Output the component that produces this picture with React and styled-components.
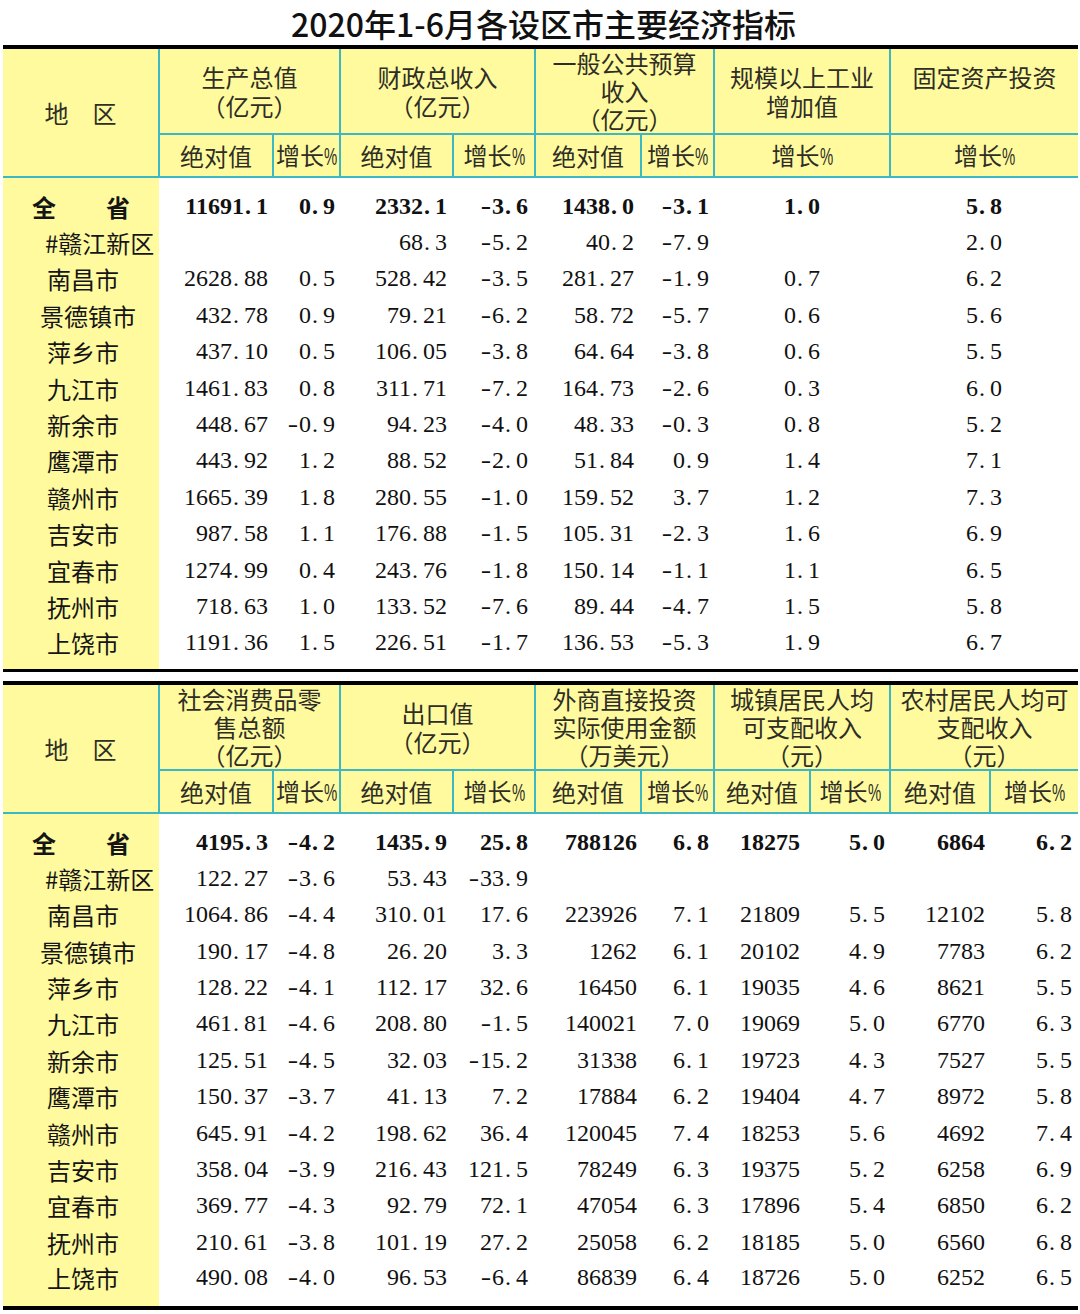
import React from 'react';
import styled, { createGlobalStyle } from 'styled-components';

const YELLOW = '#fffa9e';
const TEAL = '#3bb8c4';

const GlobalStyle = createGlobalStyle`
  html, body {
    margin: 0;
    padding: 0;
    background: #fff;
  }
  body {
    font-family: "Noto Sans CJK SC", sans-serif;
    color: #111;
    text-spacing-trim: space-all;
  }
`;

const Page = styled.div`
  width: 1080px;
  box-sizing: border-box;
  padding-left: 3px;
  display: flex;
  flex-direction: column;
`;

const Title = styled.h1`
  margin: 0;
  height: 45px;
  display: flex;
  align-items: center;
  justify-content: center;
  font-family: "Noto Sans CJK SC", sans-serif;
  font-size: 32px;
  font-weight: 500;
  line-height: 1;
  color: #111;
  padding-left: 4px;
`;

const Sheet = styled.table`
  width: 1075px;
  table-layout: fixed;
  border-collapse: collapse;
  border-top: 4px solid #000;
  border-bottom: ${p => p.$bottom}px solid #000;
  margin-bottom: ${p => p.$gap}px;
`;

const HeadRow = styled.tr`
  height: ${p => p.$h}px;
`;

const HeadCell = styled.th`
  background: ${YELLOW};
  border-right: 2px solid ${TEAL};
  border-bottom: 2px solid ${TEAL};
  padding: 0;
  font-family: "Noto Sans CJK SC", sans-serif;
  font-weight: 400;
  font-size: 24px;
  line-height: ${p => (p.$tight ? 28 : 29)}px;
  color: #2e2e26;
  text-align: center;
  vertical-align: middle;
  white-space: nowrap;

  &:last-child {
    border-right: none;
  }
`;

const Line = styled.div`
  display: block;
`;

const Pct = styled.span`
  display: inline-block;
  width: 13px;
  font-family: "Liberation Sans", sans-serif;
  transform: scaleX(0.62);
  transform-origin: left center;
`;

const Body = styled.tbody`
  tr {
    height: 36.4px;
  }
  tr:first-child {
    height: ${p => 36.4 + p.$padTop}px;
  }
  tr:first-child td {
    padding-top: ${p => p.$padTop}px;
  }
  tr:last-child {
    height: ${p => 36.4 + p.$padBottom}px;
  }
  tr:last-child td {
    padding-bottom: ${p => p.$padBottom}px;
  }
`;

const NameCell = styled.td`
  background: ${YELLOW};
  padding: 0 0 0 ${p => p.$indent}px;
  font-family: "Noto Sans CJK SC", sans-serif;
  font-size: 24px;
  font-weight: ${p => (p.$bold ? 700 : 400)};
  color: #151515;
  white-space: nowrap;
  vertical-align: middle;
`;

const Spread = styled.span`
  display: flex;
  justify-content: space-between;
  width: 98px;
`;

const ValueCell = styled.td`
  padding: 0 ${p => p.$pr}px 0 0;
  font-family: "Liberation Serif", "DejaVu Serif", serif;
  font-size: 24px;
  font-weight: ${p => (p.$bold ? 700 : 400)};
  color: #111;
  text-align: ${p => (p.$center ? 'center' : 'right')};
  white-space: nowrap;
  vertical-align: middle;
`;

const Dot = styled.span`
  display: inline-block;
  width: 0.5em;
  padding-left: 1px;
  box-sizing: border-box;
  text-align: left;
`;

const Minus = styled.span`
  display: inline-block;
  width: 0.5em;
  text-align: center;
  transform: scaleX(1.3);
`;

const Num = ({ value }) =>
  value.split(/([.-])/).map((part, i) => {
    if (part === '.') return <Dot key={i}>.</Dot>;
    if (part === '-') return <Minus key={i}>-</Minus>;
    return part;
  });

const Label = ({ text }) => {
  if (!text.endsWith('%')) return text;
  return (
    <>
      {text.slice(0, -1)}
      <Pct>%</Pct>
    </>
  );
};

const NAMES = [
  ['#赣江新区', 42],
  ['南昌市', 44],
  ['景德镇市', 37],
  ['萍乡市', 44],
  ['九江市', 44],
  ['新余市', 44],
  ['鹰潭市', 44],
  ['赣州市', 44],
  ['吉安市', 44],
  ['宜春市', 44],
  ['抚州市', 44],
  ['上饶市', 44],
];

const topTable = {
  bottom: 3,
  gap: 9,
  padTop: 11,
  padBottom: 9,
  cols: [156, 114, 67, 113, 82, 106, 73, 176, 188],
  pr: [5, 5, 6, 7, 7, 5, 0, 0],
  center: [false, false, false, false, false, false, true, true],
  groups: [
    { lines: ['生产总值', '（亿元）'], subs: ['绝对值', '增长%'] },
    { lines: ['财政总收入', '（亿元）'], subs: ['绝对值', '增长%'] },
    { lines: ['一般公共预算', '收入', '（亿元）'], subs: ['绝对值', '增长%'] },
    { lines: ['规模以上工业', '增加值'], subs: ['增长%'] },
    { lines: ['固定资产投资', '\u00a0'], subs: ['增长%'] },
  ],
  total: ['11691.1', '0.9', '2332.1', '-3.6', '1438.0', '-3.1', '1.0', '5.8'],
  rows: [
    ['', '', '68.3', '-5.2', '40.2', '-7.9', '', '2.0'],
    ['2628.88', '0.5', '528.42', '-3.5', '281.27', '-1.9', '0.7', '6.2'],
    ['432.78', '0.9', '79.21', '-6.2', '58.72', '-5.7', '0.6', '5.6'],
    ['437.10', '0.5', '106.05', '-3.8', '64.64', '-3.8', '0.6', '5.5'],
    ['1461.83', '0.8', '311.71', '-7.2', '164.73', '-2.6', '0.3', '6.0'],
    ['448.67', '-0.9', '94.23', '-4.0', '48.33', '-0.3', '0.8', '5.2'],
    ['443.92', '1.2', '88.52', '-2.0', '51.84', '0.9', '1.4', '7.1'],
    ['1665.39', '1.8', '280.55', '-1.0', '159.52', '3.7', '1.2', '7.3'],
    ['987.58', '1.1', '176.88', '-1.5', '105.31', '-2.3', '1.6', '6.9'],
    ['1274.99', '0.4', '243.76', '-1.8', '150.14', '-1.1', '1.1', '6.5'],
    ['718.63', '1.0', '133.52', '-7.6', '89.44', '-4.7', '1.5', '5.8'],
    ['1191.36', '1.5', '226.51', '-1.7', '136.53', '-5.3', '1.9', '6.7'],
  ],
};

const bottomTable = {
  bottom: 4,
  gap: 0,
  padTop: 11,
  padBottom: 11,
  cols: [156, 114, 67, 113, 82, 106, 73, 96, 80, 100, 88],
  pr: [5, 5, 6, 7, 4, 5, 10, 5, 5, 6],
  center: new Array(10).fill(false),
  groups: [
    { lines: ['社会消费品零', '售总额', '（亿元）'], subs: ['绝对值', '增长%'] },
    { lines: ['出口值', '（亿元）'], subs: ['绝对值', '增长%'] },
    { lines: ['外商直接投资', '实际使用金额', '（万美元）'], subs: ['绝对值', '增长%'] },
    { lines: ['城镇居民人均', '可支配收入', '（元）'], subs: ['绝对值', '增长%'] },
    { lines: ['农村居民人均可', '支配收入', '（元）'], subs: ['绝对值', '增长%'] },
  ],
  total: ['4195.3', '-4.2', '1435.9', '25.8', '788126', '6.8', '18275', '5.0', '6864', '6.2'],
  rows: [
    ['122.27', '-3.6', '53.43', '-33.9', '', '', '', '', '', ''],
    ['1064.86', '-4.4', '310.01', '17.6', '223926', '7.1', '21809', '5.5', '12102', '5.8'],
    ['190.17', '-4.8', '26.20', '3.3', '1262', '6.1', '20102', '4.9', '7783', '6.2'],
    ['128.22', '-4.1', '112.17', '32.6', '16450', '6.1', '19035', '4.6', '8621', '5.5'],
    ['461.81', '-4.6', '208.80', '-1.5', '140021', '7.0', '19069', '5.0', '6770', '6.3'],
    ['125.51', '-4.5', '32.03', '-15.2', '31338', '6.1', '19723', '4.3', '7527', '5.5'],
    ['150.37', '-3.7', '41.13', '7.2', '17884', '6.2', '19404', '4.7', '8972', '5.8'],
    ['645.91', '-4.2', '198.62', '36.4', '120045', '7.4', '18253', '5.6', '4692', '7.4'],
    ['358.04', '-3.9', '216.43', '121.5', '78249', '6.3', '19375', '5.2', '6258', '6.9'],
    ['369.77', '-4.3', '92.79', '72.1', '47054', '6.3', '17896', '5.4', '6850', '6.2'],
    ['210.61', '-3.8', '101.19', '27.2', '25058', '6.2', '18185', '5.0', '6560', '6.8'],
    ['490.08', '-4.0', '96.53', '-6.4', '86839', '6.4', '18726', '5.0', '6252', '6.5'],
  ],
};

const IndicatorTable = ({ data }) => (
  <Sheet $bottom={data.bottom} $gap={data.gap}>
    <colgroup>
      {data.cols.map((w, i) => (
        <col key={i} style={{ width: w }} />
      ))}
    </colgroup>
    <thead>
      <HeadRow $h={86}>
        <HeadCell rowSpan={2}>地　区</HeadCell>
        {data.groups.map((g, i) => (
          <HeadCell key={i} colSpan={g.subs.length} $tight={g.lines.length > 2}>
            {g.lines.map((l, j) => (
              <Line key={j}>{l}</Line>
            ))}
          </HeadCell>
        ))}
      </HeadRow>
      <HeadRow $h={43}>
        {data.groups.flatMap((g, i) =>
          g.subs.map((s, j) => (
            <HeadCell key={`${i}-${j}`}>
              <Label text={s} />
            </HeadCell>
          ))
        )}
      </HeadRow>
    </thead>
    <Body $padTop={data.padTop} $padBottom={data.padBottom}>
      <tr>
        <NameCell $indent={29} $bold>
          <Spread>
            <span>全</span>
            <span>省</span>
          </Spread>
        </NameCell>
        {data.total.map((v, i) => (
          <ValueCell key={i} $bold $pr={data.pr[i]} $center={data.center[i]}>
            <Num value={v} />
          </ValueCell>
        ))}
      </tr>
      {data.rows.map((row, r) => (
        <tr key={r}>
          <NameCell $indent={NAMES[r][1]}>{NAMES[r][0]}</NameCell>
          {row.map((v, i) => (
            <ValueCell key={i} $pr={data.pr[i]} $center={data.center[i]}>
              <Num value={v} />
            </ValueCell>
          ))}
        </tr>
      ))}
    </Body>
  </Sheet>
);

export default function App() {
  return (
    <>
      <GlobalStyle />
      <Page>
        <Title>2020年1-6月各设区市主要经济指标</Title>
        <IndicatorTable data={topTable} />
        <IndicatorTable data={bottomTable} />
      </Page>
    </>
  );
}
